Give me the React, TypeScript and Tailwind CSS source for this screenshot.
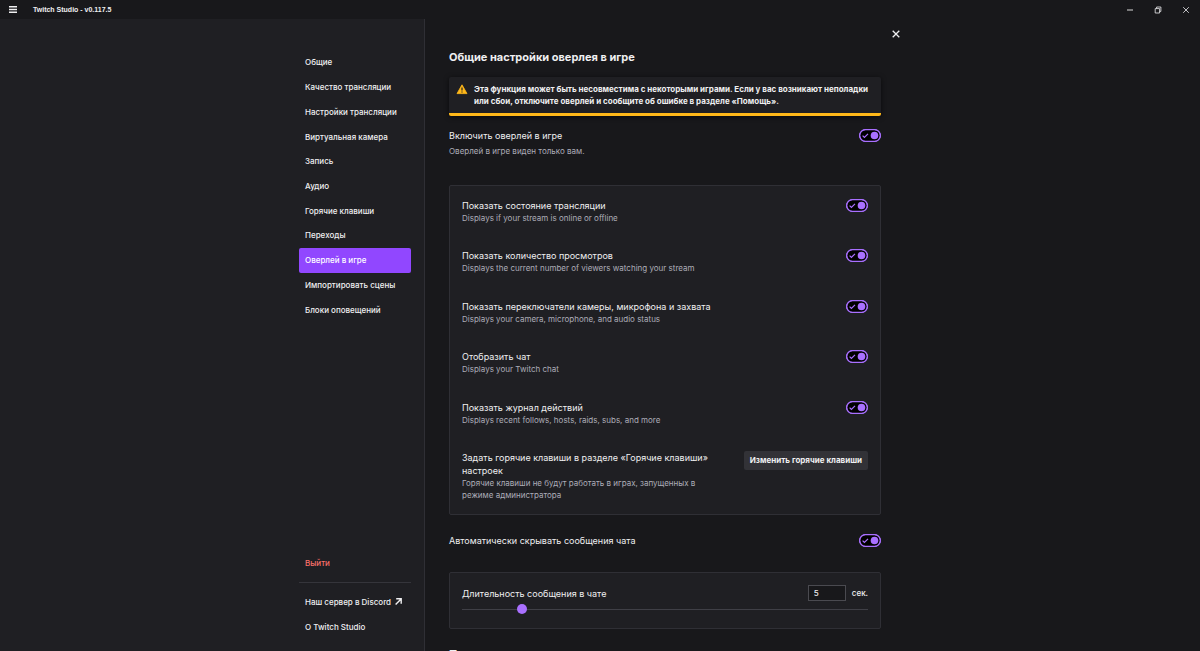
import { useState } from 'react';
import type { ReactNode } from 'react';

const NAV_ITEMS = [
    'Общие',
    'Качество трансляции',
    'Настройки трансляции',
    'Виртуальная камера',
    'Запись',
    'Аудио',
    'Горячие клавиши',
    'Переходы',
    'Оверлей в игре',
    'Импортировать сцены',
    'Блоки оповещений',
];

const WIDGETS = [
    { id: 'status', title: 'Показать состояние трансляции', hint: 'Displays if your stream is online or offline' },
    { id: 'viewers', title: 'Показать количество просмотров', hint: 'Displays the current number of viewers watching your stream' },
    { id: 'devices', title: 'Показать переключатели камеры, микрофона и захвата', hint: 'Displays your camera, microphone, and audio status' },
    { id: 'chat', title: 'Отобразить чат', hint: 'Displays your Twitch chat' },
    { id: 'activity', title: 'Показать журнал действий', hint: 'Displays recent follows, hosts, raids, subs, and more' },
];

function Toggle({ id }: { id: string }) {
    return (
        <span className="grid shrink-0">
            <input
                id={id}
                type="checkbox"
                defaultChecked
                className="peer col-start-1 row-start-1 h-[13px] w-[22px] cursor-pointer appearance-none rounded-full border border-[#a970ff] bg-black"
            />
            <svg viewBox="0 0 22 13" className="pointer-events-none col-start-1 row-start-1 h-[13px] w-[22px] opacity-0 peer-checked:opacity-100" fill="none">
                <rect x="0.7" y="0.7" width="20.6" height="11.6" rx="5.8" stroke="#a970ff" strokeWidth="1.3" />
                <path d="M3.6 6.6 L5.4 8.4 L9 4.8" stroke="#a970ff" strokeWidth="1.2" />
                <circle cx="15.5" cy="6.5" r="3.8" fill="#a970ff" />
            </svg>
        </span>
    );
}

function ToggleRow({ id, title, children }: { id: string; title: string; children?: ReactNode }) {
    return (
        <div className="flex items-start justify-between">
            <div>
                <label htmlFor={id} className="block text-[9px] leading-[13px]">{title}</label>
                {children}
            </div>
            <Toggle id={id} />
        </div>
    );
}

function TitleBar() {
    return (
        <header className="flex h-[19px] shrink-0 items-center bg-[#18181b] pl-2 text-[#efeff1]">
            <button aria-label="Меню" className="flex h-[19px] w-[10px] items-center justify-center">
                <svg viewBox="0 0 8 7" className="h-[7px] w-2" fill="currentColor">
                    <path d="M0 0h8v1.4H0zM0 2.8h8v1.4H0zM0 5.6h8V7H0z" />
                </svg>
            </button>
            <h1 className="ml-[15px] flex-1 font-['Liberation_Sans',sans-serif] text-[7px] leading-[13px] font-bold">Twitch Studio - v0.117.5</h1>
            <button aria-label="Свернуть" className="flex h-[19px] w-7 items-center justify-center">
                <svg viewBox="0 0 8 8" className="size-2" stroke="currentColor" fill="none">
                    <path d="M1 4h6" strokeWidth="0.9" />
                </svg>
            </button>
            <button aria-label="Развернуть" className="flex h-[19px] w-7 items-center justify-center">
                <svg viewBox="0 0 8 8" className="size-2" stroke="currentColor" strokeWidth="0.8" fill="none">
                    <path d="M1.2 2.6h4.4v4.4H1.2zM2.6 2.6V1h4.3v4.4H5.6" />
                </svg>
            </button>
            <button aria-label="Закрыть окно" className="flex h-[19px] w-7 items-center justify-center">
                <svg viewBox="0 0 8 8" className="size-2" stroke="currentColor" strokeWidth="0.8" fill="none">
                    <path d="M1.2 1.2l5.6 5.6M6.8 1.2L1.2 6.8" />
                </svg>
            </button>
        </header>
    );
}

function Sidebar() {
    const [active, setActive] = useState('Оверлей в игре');

    return (
        <aside className="flex w-[calc(50%-176px)] min-w-[125px] shrink-0 justify-end bg-[#1f1f23] pr-[13px] text-[8px] font-medium">
            <div className="flex w-28 flex-col justify-between pt-[31px] pb-3">
                <nav className="grid h-[272px] auto-rows-fr grid-cols-1">
                    {NAV_ITEMS.map((item) => (
                        <button
                            key={item}
                            onClick={() => setActive(item)}
                            className={
                                item === active
                                    ? 'rounded-[2px] bg-[#9147ff] px-1.5 text-left whitespace-nowrap text-white'
                                    : 'rounded-[2px] px-1.5 text-left whitespace-nowrap'
                            }
                        >
                            {item}
                        </button>
                    ))}
                </nav>
                <div className="flex flex-col items-start">
                    <button className="h-[25px] px-1.5 text-[#f8706a]">Выйти</button>
                    <hr className="mt-[7px] mb-[6px] w-full border-[#35353b]" />
                    <a href="#discord" className="flex h-[25px] items-center gap-1 px-1.5 whitespace-nowrap">
                        Наш сервер в Discord
                        <svg viewBox="0 0 7 7" className="size-[7px]" stroke="currentColor" strokeWidth="1.4" fill="none">
                            <path d="M1.2 0.8h5v5M6.1 0.9L0.6 6.4" />
                        </svg>
                    </a>
                    <button className="h-[25px] px-1.5">О Twitch Studio</button>
                </div>
            </div>
        </aside>
    );
}

function Warning() {
    return (
        <div role="alert" className="mt-3 flex rounded-[2px] border-b-3 border-[#ffb819] bg-[#1f1f23] pt-[6px] pb-[6px] pl-[7px] shadow-[0_1px_5px_rgba(0,0,0,0.6)]">
            <svg viewBox="0 0 12 11" className="mt-[1px] h-[11px] w-3 shrink-0">
                <path d="M6 0.8 L11 9.6 H1 Z" fill="#ffb819" stroke="#ffb819" strokeWidth="0.8" strokeLinejoin="round" />
                <path d="M5.4 3.6h1.2v3H5.4zM5.4 7.4h1.2v1.2H5.4z" fill="#1f1f23" />
            </svg>
            <p className="ml-[6px] pr-[6px] text-[8px] leading-3 font-bold">
                Эта функция может быть несовместима с некоторыми играми. Если у вас возникают неполадки
                или сбои, отключите оверлей и сообщите об ошибке в разделе «Помощь».
            </p>
        </div>
    );
}

export default function App() {
    const [seconds, setSeconds] = useState(5);

    return (
        <div className="flex h-screen flex-col overflow-hidden bg-[#18181b] font-['Inter',sans-serif] text-[#efeff1]">
            <TitleBar />
            <div className="flex min-h-0 flex-1">
                <Sidebar />
                <main className="flex flex-1 items-start overflow-y-auto border-l border-[#2f2f35] pl-6 [scrollbar-width:none]">
                    <div className="w-full max-w-[432px] pt-[31px]">
                        <h2 className="text-[11px] leading-[15px] font-bold">Общие настройки оверлея в игре</h2>
                        <Warning />

                        <div className="mt-[13px]">
                            <ToggleRow id="overlay" title="Включить оверлей в игре">
                                <p className="mt-[3px] text-[8px] leading-3 text-[#adadb8]">Оверлей в игре виден только вам.</p>
                            </ToggleRow>
                        </div>

                        {/* Widgets shown inside the overlay */}
                        <section className="mt-7 flex min-h-[330px] flex-col justify-between rounded-[2px] border border-[#2f2f35] bg-[#1f1f23] px-3 py-[13px]">
                            {WIDGETS.map((w) => (
                                <ToggleRow key={w.id} id={w.id} title={w.title}>
                                    <p className="text-[8px] leading-3 text-[#adadb8]">{w.hint}</p>
                                </ToggleRow>
                            ))}
                            <div className="flex items-start justify-between">
                                <div className="w-[250px]">
                                    <h3 className="text-[9px] leading-[13px]">Задать горячие клавиши в разделе «Горячие клавиши» настроек</h3>
                                    <p className="text-[8px] leading-3 text-[#adadb8]">Горячие клавиши не будут работать в играх, запущенных в режиме администратора</p>
                                </div>
                                <button className="h-[19px] rounded-[2px] bg-[#323237] px-1.5 text-[8px] font-bold whitespace-nowrap">
                                    Изменить горячие клавиши
                                </button>
                            </div>
                        </section>

                        <div className="mt-[19px]">
                            <ToggleRow id="autohide" title="Автоматически скрывать сообщения чата" />
                        </div>

                        <section className="mt-[25px] rounded-[2px] border border-[#2f2f35] bg-[#1f1f23] px-3 pt-3 pb-[13px]">
                            <div className="flex h-4 items-center">
                                <label htmlFor="duration" className="flex-1 text-[9px] leading-[13px]">Длительность сообщения в чате</label>
                                <input
                                    id="duration"
                                    value={seconds}
                                    onChange={(e) => setSeconds(Number(e.target.value) || 0)}
                                    className="h-4 w-[38px] border border-[#4a4a50] bg-[#18181b] px-[5px] text-[8px] font-medium"
                                />
                                <span className="ml-[6px] text-[8px] leading-[13px] font-medium">сек.</span>
                            </div>
                            <input
                                type="range"
                                aria-label="Длительность сообщения в чате"
                                min={1}
                                max={30}
                                value={seconds}
                                onChange={(e) => setSeconds(Number(e.target.value))}
                                className="mt-[3px] block h-[11px] w-full appearance-none bg-transparent [&::-webkit-slider-runnable-track]:h-px [&::-webkit-slider-runnable-track]:bg-[#3f3f46] [&::-webkit-slider-thumb]:-mt-[5px] [&::-webkit-slider-thumb]:size-[10px] [&::-webkit-slider-thumb]:appearance-none [&::-webkit-slider-thumb]:rounded-full [&::-webkit-slider-thumb]:bg-[#a970ff]"
                            />
                        </section>

                        <h2 className="mt-[18px] text-[11px] leading-[15px] font-bold">П</h2>
                    </div>
                    <button aria-label="Закрыть" className="mt-[5px] ml-[5px] flex size-5 shrink-0 items-center justify-center">
                        <svg viewBox="0 0 8 8" className="size-2" stroke="currentColor" strokeWidth="1.3" fill="none">
                            <path d="M0.7 0.7l6.6 6.6M7.3 0.7L0.7 7.3" />
                        </svg>
                    </button>
                </main>
            </div>
        </div>
    );
}
